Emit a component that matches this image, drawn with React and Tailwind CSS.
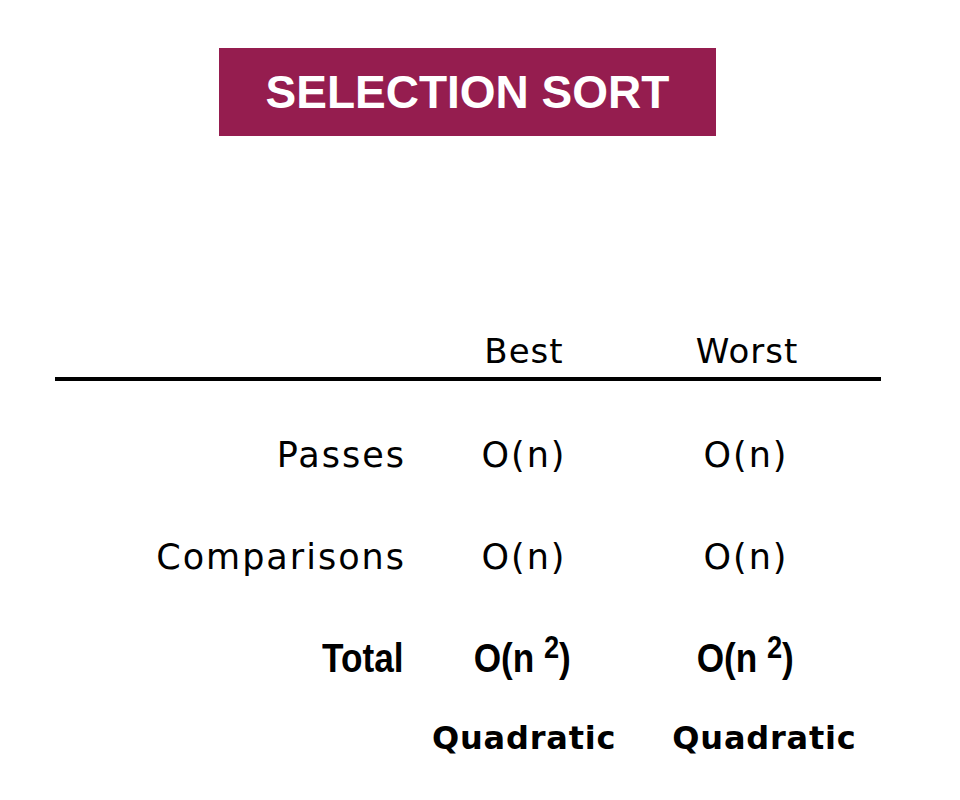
import React from 'react';

const body = { fontFamily: "'DejaVu Sans', 'Open Sans', sans-serif" };
const heavy = { fontFamily: "'Liberation Sans', Arial, sans-serif" };

const rows = [
    { label: 'Passes', best: 'O(n)', worst: 'O(n)' },
    { label: 'Comparisons', best: 'O(n)', worst: 'O(n)' },
];

const Squared = () => (
    <span className="inline-block scale-x-[0.88] whitespace-nowrap">
        O(n
        <span className="relative -top-[14px] ml-[11px] text-[31px]">2</span>
        )
    </span>
);

const App = () => {
    return (
        <div className="w-[960px] h-[800px] bg-white text-black pt-[48px] overflow-hidden">
            {/* Title */}
            <div className="ml-[219px] w-[497px] h-[88px] bg-[#951d4f] flex items-center justify-center">
                <h1 className="text-white text-[46px] font-bold leading-[46px] tracking-normal" style={heavy}>
                    SELECTION SORT
                </h1>
            </div>

            <div className="ml-[55px] w-[826px]">
                {/* Header */}
                <div className="mt-[195px] grid grid-cols-[349px_240px_204px] h-[40px] text-[34px] leading-[40px] tracking-[1px]" style={body}>
                    <div></div>
                    <div className="text-center">Best</div>
                    <div className="text-center pl-[2px]">Worst</div>
                </div>

                <div className="mt-[6px] h-[4px] bg-black"></div>

                {/* Rows */}
                <div className="mt-[54px] flex flex-col gap-[62px]">
                    {rows.map((r) => (
                        <div key={r.label} className="grid grid-cols-[349px_240px_204px] h-[40px] text-[35px] leading-[40px] tracking-[2px]" style={body}>
                            <div className="text-right -mr-[2px]">{r.label}</div>
                            <div className="text-center">{r.best}</div>
                            <div className="text-center">{r.worst}</div>
                        </div>
                    ))}
                </div>

                {/* Total */}
                <div className="mt-[57px] grid grid-cols-[349px_240px_204px] h-[48px] text-[40px] leading-[48px] font-bold" style={heavy}>
                    <div className="text-right">
                        <span className="inline-block scale-x-[0.88] origin-right">Total</span>
                    </div>
                    <div className="text-center pr-[4px]"><Squared /></div>
                    <div className="text-center pr-[2px]"><Squared /></div>
                </div>

                {/* Quadratic */}
                <div className="mt-[36px] flex gap-[56px] pl-[377px] h-[40px] text-[32px] leading-[40px] font-bold tracking-[0.8px]" style={body}>
                    <span>Quadratic</span>
                    <span>Quadratic</span>
                </div>
            </div>
        </div>
    );
};

export default App;
